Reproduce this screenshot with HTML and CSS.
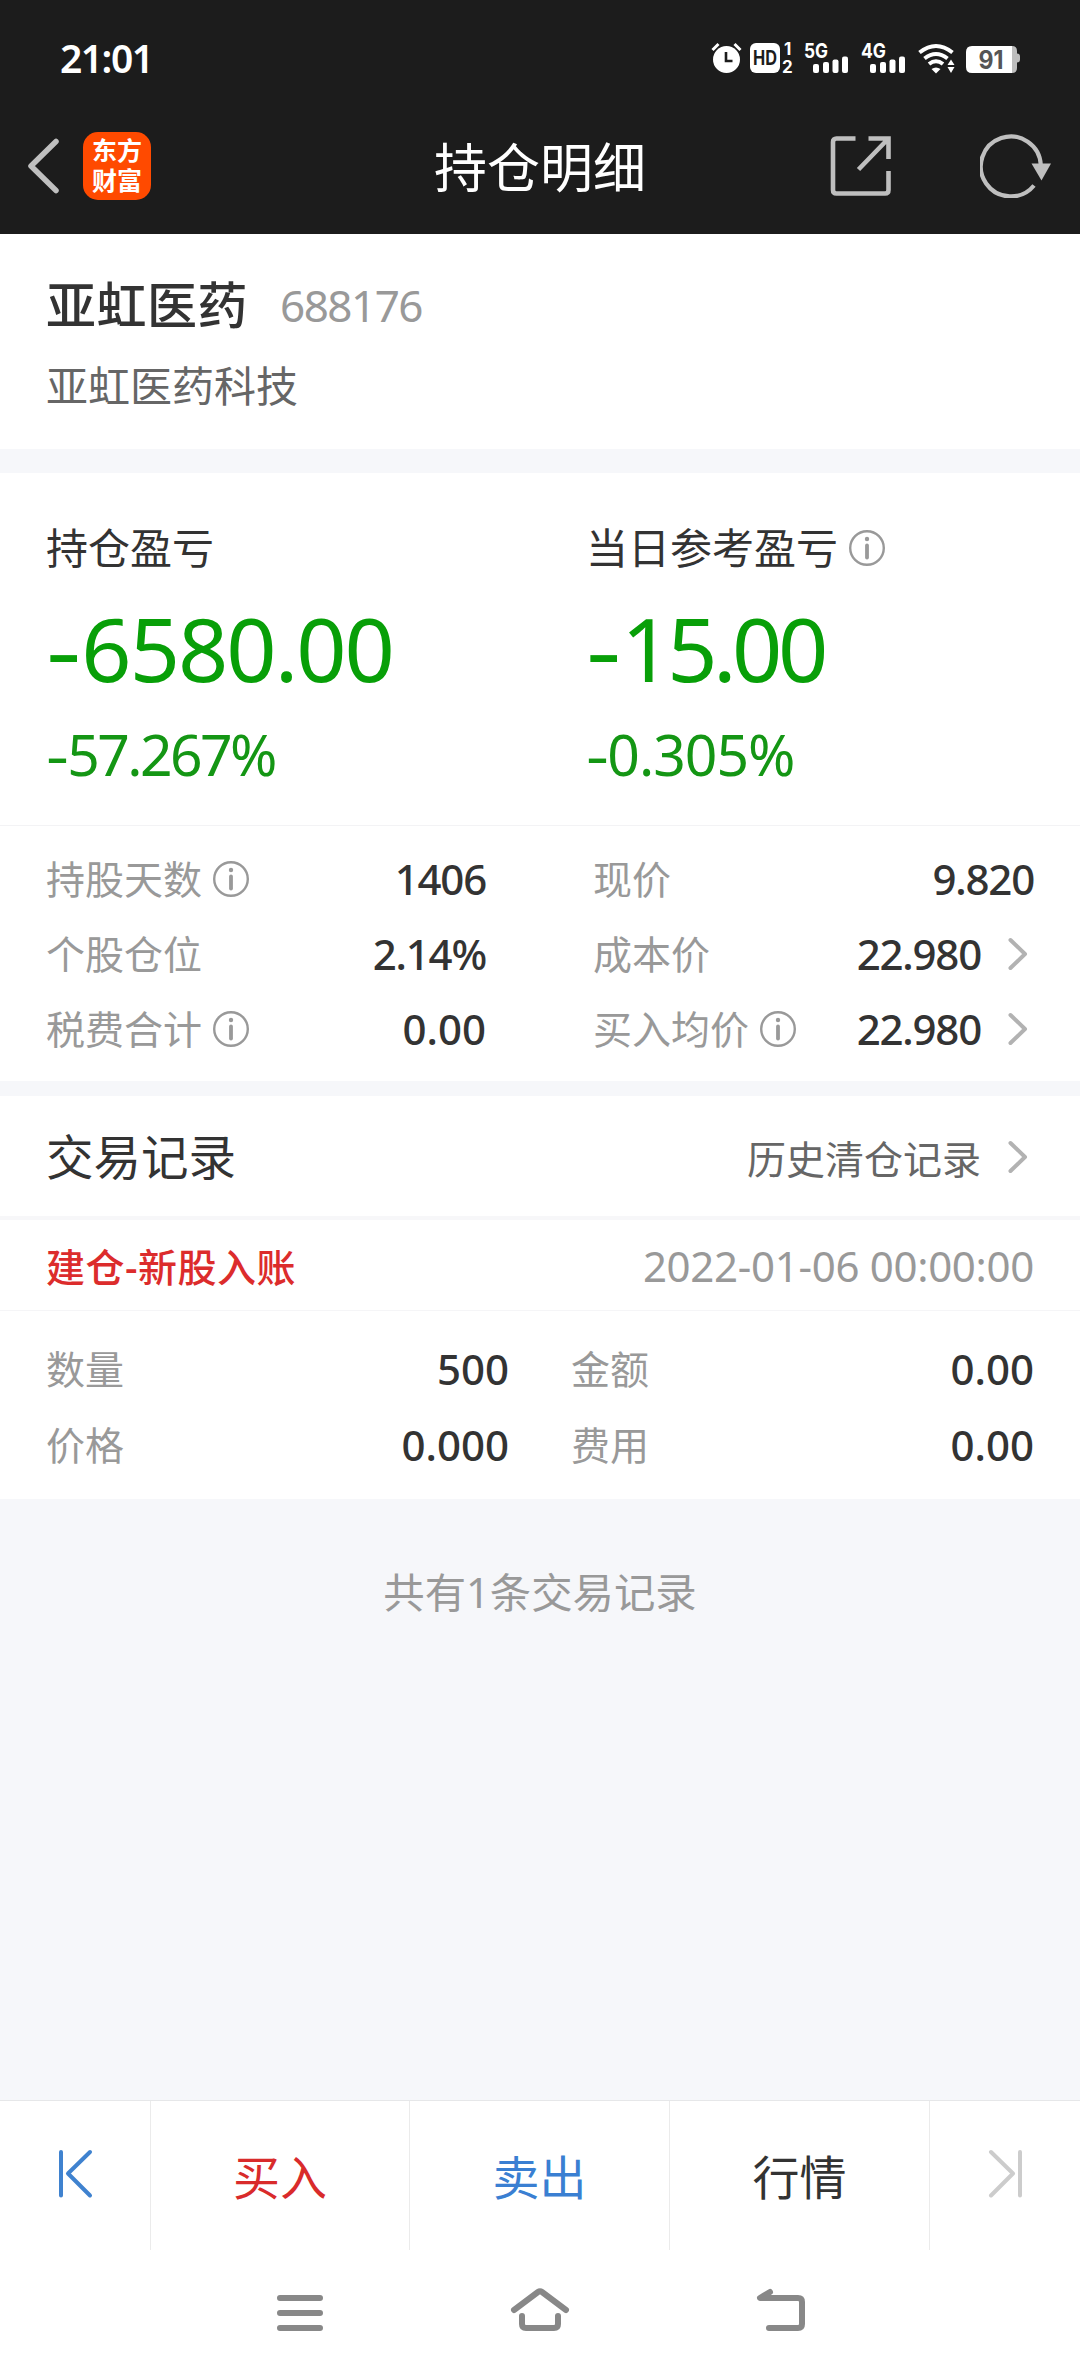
FILE: index.html
```html
<!DOCTYPE html>
<html lang="zh-CN">
<head>
    <meta charset="UTF-8">
    <meta name="viewport" content="width=device-width, initial-scale=1.0">
    <title>持仓明细</title>
    <link rel="stylesheet" href="styles.css">
</head>
<body>
    <svg class="defs" width="0" height="0">
        <symbol id="info" viewBox="0 0 36 36">
            <circle cx="18" cy="18" r="16.8" fill="none" stroke="#999" stroke-width="2.4"/>
            <circle cx="18" cy="9" r="2.2" fill="#999"/>
            <path d="M18 15.5v12" stroke="#999" stroke-width="3.8" stroke-linecap="round"/>
        </symbol>
        <symbol id="arrow" viewBox="0 0 20 34">
            <path d="M2.5 3l14.5 14-14.5 14" fill="none" stroke="#b2b2b2" stroke-width="4" stroke-linecap="round" stroke-linejoin="round"/>
        </symbol>
    </svg>

    <header class="top">
        <div class="status">
            <span class="time">21:01</span>
            <svg class="status-icons" width="312" height="44" viewBox="0 0 312 44">
                <!-- alarm -->
                <g fill="none" stroke="#fff" stroke-width="3">
                    <path d="M1.5 10l6-6M29.500 10l-6-6"/>
                </g>
                <circle cx="15.500" cy="19.500" r="13.500" fill="#fff"/>
                <path d="M15 12v9h6.500" fill="none" stroke="#1c1c1c" stroke-width="2.600"/>
                <!-- hd -->
                <rect x="39" y="3" width="30" height="30" rx="6" fill="#fff"/>
                <text class="st-hd" x="54" y="25" textLength="24" lengthAdjust="spacingAndGlyphs">HD</text>
                <text class="st-num" x="73" y="15">1</text>
                <text class="st-num" x="71" y="33">2</text>
                <!-- signal 1 -->
                <text class="st-net" x="93" y="18" textLength="24" lengthAdjust="spacingAndGlyphs">5G</text>
                <g fill="#fff">
                    <rect x="102" y="24" width="6" height="9" rx="2"/>
                    <rect x="112" y="22" width="6" height="11" rx="2"/>
                    <rect x="121.500" y="19.500" width="6" height="13.500" rx="2"/>
                    <rect x="131" y="16.500" width="6" height="16.500" rx="2"/>
                </g>
                <!-- signal 2 -->
                <text class="st-net" x="150" y="18" textLength="25" lengthAdjust="spacingAndGlyphs">4G</text>
                <g fill="#fff">
                    <rect x="159" y="24" width="6" height="9" rx="2"/>
                    <rect x="169" y="22" width="6" height="11" rx="2"/>
                    <rect x="178.500" y="19.500" width="6" height="13.500" rx="2"/>
                    <rect x="188" y="16.500" width="6" height="16.500" rx="2"/>
                </g>
                <!-- wifi -->
                <g fill="none" stroke="#fff" stroke-width="4">
                    <path d="M208.500 12.500q16.500-13 33 0"/>
                    <path d="M213.500 18.500q11.500-9 23 0"/>
                    <path d="M218 24q7-5.500 14 0"/>
                </g>
                <path d="M220.500 29q4.500-3 9 0l-4.500 4.500z" fill="#fff"/>
                <path d="M236.500 25h7l-3.500-5.500zM236.500 27h7l-3.500 6z" fill="#fff"/>
                <!-- battery -->
                <path d="M300 6h1q5 0 5 5v2.500q3 0 3 3v3q0 3-3 3v5.500q0 5-5 5h-1z" fill="#bdbdbd"/>
                <path d="M261 6h40v27h-40q-6 0-6-6v-15q0-6 6-6z" fill="#fff"/>
                <text class="st-bat" x="280" y="28.500" textLength="25" lengthAdjust="spacingAndGlyphs">91</text>
            </svg>
        </div>
        <nav class="nav">
            <div class="nav-left">
                <svg width="36" height="58" viewBox="0 0 36 58">
                    <path d="M31 4.500L6 29l25 24.500" fill="none" stroke="#bfbfbf" stroke-width="5.500" stroke-linecap="round" stroke-linejoin="round"/>
                </svg>
                <div class="logo"><span>东方</span><span>财富</span></div>
            </div>
            <h1>持仓明细</h1>
            <div class="nav-right">
                <svg width="62" height="62" viewBox="0 0 62 62">
                    <g fill="none" stroke="#bfbfbf" stroke-width="4.600">
                        <path d="M25.500 3.500H6.500q-3.500 0-3.500 3.500v48q0 3.500 3.500 3.500h48.500q3.500 0 3.500-3.500V36"/>
                        <path d="M38.500 3.500h20V24M57.500 4.500L28.500 34.500"/>
                    </g>
                </svg>
                <svg width="72" height="64" viewBox="0 0 72 64">
                    <path d="M54 51.500a30 30 0 1 1 6.800-20.500" fill="none" stroke="#bfbfbf" stroke-width="4.200"/>
                    <path d="M51.500 29.500h19.500L61.500 46.500z" fill="#bfbfbf"/>
                </svg>
            </div>
        </nav>
    </header>

    <section class="stock">
        <div class="stock-title">
            <h2>亚虹医药</h2>
            <span class="code">688176</span>
        </div>
        <p class="company">亚虹医药科技</p>
    </section>

    <section class="profit">
        <div class="profit-col">
            <div class="profit-label">持仓盈亏</div>
            <div class="profit-money"><span class="sign">-</span>6580.00</div>
            <div class="profit-rate"><span class="sign">-</span>57.267%</div>
        </div>
        <div class="profit-col">
            <div class="profit-label">当日参考盈亏<svg class="info"><use href="#info"/></svg></div>
            <div class="profit-money today"><span class="sign">-</span>15.00</div>
            <div class="profit-rate today"><span class="sign">-</span>0.305%</div>
        </div>
    </section>

    <section class="detail">
        <div class="detail-col">
            <div class="row"><span class="label">持股天数<svg class="info"><use href="#info"/></svg></span><span class="value tight">1406</span></div>
            <div class="row"><span class="label">个股仓位</span><span class="value tight">2.14%</span></div>
            <div class="row"><span class="label">税费合计<svg class="info"><use href="#info"/></svg></span><span class="value">0.00</span></div>
        </div>
        <div class="detail-col">
            <div class="row"><span class="label">现价</span><span class="value tight">9.820</span></div>
            <div class="row"><span class="label">成本价</span><span class="value tight">22.980<svg class="arrow"><use href="#arrow"/></svg></span></div>
            <div class="row"><span class="label">买入均价<svg class="info"><use href="#info"/></svg></span><span class="value tight">22.980<svg class="arrow"><use href="#arrow"/></svg></span></div>
        </div>
    </section>

    <section class="records">
        <div class="records-head">
            <h3>交易记录</h3>
            <a class="history">历史清仓记录<svg class="arrow"><use href="#arrow"/></svg></a>
        </div>
        <div class="record-title">
            <span class="type">建仓-新股入账</span>
            <span class="date">2022-01-06 00:00:00</span>
        </div>
        <div class="record-body">
            <div class="row"><span class="label">数量</span><span class="value">500</span></div>
            <div class="row"><span class="label">金额</span><span class="value">0.00</span></div>
            <div class="row"><span class="label">价格</span><span class="value">0.000</span></div>
            <div class="row"><span class="label">费用</span><span class="value">0.00</span></div>
        </div>
    </section>

    <main class="count">共有1条交易记录</main>

    <footer class="tabs">
        <div class="tab">
            <svg width="36" height="50" viewBox="0 0 36 50">
                <path d="M4 3v43.500M33 3L11 24.500 33 46.500" fill="none" stroke="#3f82cf" stroke-width="4" stroke-linecap="round" stroke-linejoin="round"/>
            </svg>
        </div>
        <div class="tab buy">买入</div>
        <div class="tab sell">卖出</div>
        <div class="tab">行情</div>
        <div class="tab">
            <svg width="36" height="50" viewBox="0 0 36 50">
                <path d="M33 3v43.500M4 3l22 21.500L4 46.500" fill="none" stroke="#ccc" stroke-width="4" stroke-linecap="round" stroke-linejoin="round"/>
            </svg>
        </div>
    </footer>

    <div class="system">
        <svg width="60" height="50" viewBox="0 0 60 50">
            <path d="M10 13h40M10 28h40M10 43h40"/>
        </svg>
        <svg width="60" height="50" viewBox="0 0 60 50">
            <path d="M4 25L28 7q2-1.500 4 0l24 18M12 31v8q0 4 4 4h28q4 0 4-4v-8"/>
        </svg>
        <svg width="60" height="50" viewBox="0 0 60 50">
            <path d="M20 7L10 13h38q4 0 4 4v22q0 4-4 4H19"/>
        </svg>
    </div>
</body>
</html>
```
FILE: styles.css
```css
*{
  box-sizing: border-box;
  margin: 0;
  padding: 0;
}
body{
  display: flex;
  flex-direction: column;
  width: 1080px;
  height: 2376px;
  font-family: 'Noto Sans', 'Noto Sans CJK SC', sans-serif;
  color: #333;
  background-color: #f6f7fa;
  overflow: hidden;
}
.defs{
  display: none;
}
.top{
  height: 234px;
  background-color: #1c1c1c;
  color: white;
}
.status{
  display: flex;
  justify-content: space-between;
  height: 100px;
  padding: 0 57px 0 60px;
}
.time{
  font-size: 39px;
  font-weight: 600;
  line-height: 115px;
  letter-spacing: -1.5px;
}
.status-icons{
  margin-top: 40px;
}
.st-hd, .st-num, .st-net, .st-bat{
  font-family: 'Inter', sans-serif;
  font-weight: 700;
  fill: white;
}
.st-hd{
  font-size: 20px;
  fill: #1c1c1c;
  text-anchor: middle;
}
.st-num{
  font-size: 17px;
}
.st-net{
  font-size: 20px;
}
.st-bat{
  font-size: 25px;
  fill: #555;
  text-anchor: middle;
}
.nav{
  display: grid;
  grid-template-columns: 1fr 300px 1fr;
  align-items: center;
  height: 132px;
}
.nav-left{
  display: flex;
  align-items: center;
  gap: 22px;
  padding-left: 25px;
}
.logo{
  display: flex;
  flex-direction: column;
  align-items: center;
  width: 68px;
  height: 68px;
  padding-top: 3px;
  border-radius: 15px;
  background-color: #ff4a00;
  font-size: 25px;
  font-weight: 700;
  line-height: 30px;
}
.nav h1{
  padding-top: 4px;
  font-size: 53px;
  font-weight: 400;
  text-align: center;
  line-height: 70px;
}
.nav-right{
  display: flex;
  align-items: center;
  justify-content: flex-end;
  gap: 88px;
  padding-right: 28px;
}
.stock{
  height: 215px;
  padding: 34px 46px 0;
  background-color: white;
}
.stock-title{
  display: flex;
  align-items: center;
  gap: 32px;
  height: 74px;
}
.stock h2{
  font-size: 50px;
  font-weight: 500;
  line-height: 74px;
  letter-spacing: 0.5px;
}
.code{
  font-size: 44px;
  line-height: 74px;
  letter-spacing: -1.5px;
  color: #999;
}
.company{
  margin-top: 14px;
  font-size: 42px;
  line-height: 60px;
  color: #666;
}
.profit{
  display: grid;
  grid-template-columns: 1fr 1fr;
  height: 353px;
  margin-top: 24px;
  padding: 45px 0 0 46px;
  border-bottom: 1px solid #f3f3f5;
  background-color: white;
}
.profit-col:last-child{
  padding-left: 23px;
}
.profit-label{
  display: flex;
  align-items: center;
  font-size: 42px;
  line-height: 60px;
}
.info{
  width: 36px;
  height: 36px;
  margin-left: 11px;
}
.profit-money{
  margin-top: 15px;
  font-size: 88px;
  line-height: 110px;
  letter-spacing: -2px;
  color: #089f08;
}
.profit-money.today{
  letter-spacing: -4.5px;
}
.profit-rate{
  margin-top: 11px;
  font-size: 57px;
  line-height: 80px;
  letter-spacing: -2.6px;
  color: #149614;
}
.profit-rate.today{
  letter-spacing: -1px;
}
/* the hyphen is narrow in this font, stretch it to a minus */
.sign{
  display: inline-block;
  margin-right: 7px;
  letter-spacing: 0;
  transform: scaleX(1.25);
  transform-origin: left;
}
.profit-rate .sign{
  margin-right: 3px;
}
.detail{
  display: grid;
  grid-template-columns: 547px 1fr;
  height: 255px;
  padding: 15px 46px 0;
  background-color: white;
}
.detail-col:first-child{
  padding-right: 107px;
}
.row{
  display: flex;
  align-items: center;
  justify-content: space-between;
  height: 75px;
  line-height: 75px;
}
.label{
  display: flex;
  align-items: center;
  font-size: 39px;
  color: #999;
}
.label .info{
  margin-left: 11px;
}
.value{
  display: flex;
  align-items: center;
  font-size: 42px;
  font-weight: 500;
}
.tight{
  letter-spacing: -1.2px;
}
.arrow{
  width: 20px;
  height: 34px;
  margin: 0 6px 0 27px;
}
.records{
  height: 403px;
  margin-top: 15px;
  background-color: white;
}
.records-head{
  display: flex;
  align-items: center;
  justify-content: space-between;
  height: 124px;
  padding: 0 46px;
  border-bottom: 4px solid #f7f7f9;
}
.records-head h3{
  padding-bottom: 3px;
  font-size: 47.5px;
  font-weight: 400;
}
.history{
  display: flex;
  align-items: center;
  padding-top: 2px;
  font-size: 39px;
  color: #666;
}
.record-title{
  display: flex;
  align-items: center;
  justify-content: space-between;
  height: 91px;
  padding: 0 46px;
  border-bottom: 1px solid #f5f5f7;
}
.type{
  font-size: 39px;
  font-weight: 500;
  letter-spacing: 0.5px;
  color: #dc2c2c;
}
.date{
  font-size: 42px;
  letter-spacing: -0.3px;
  color: #999;
}
.record-body{
  display: grid;
  grid-template-columns: 463px 463px;
  column-gap: 62px;
  padding: 19px 46px 0;
}
.record-body .row{
  height: 76px;
}
.count{
  flex: 1;
  padding-top: 63px;
  font-size: 41.4px;
  line-height: 60px;
  text-align: center;
  color: #999;
}
.tabs{
  display: grid;
  grid-template-columns: 151px 259px 260px 260px 150px;
  height: 150px;
  border-top: 1px solid #e6e7e9;
  background-color: white;
}
.tab{
  display: flex;
  align-items: center;
  justify-content: center;
  padding-bottom: 3px;
  border-right: 1px solid #ebebeb;
  font-size: 47px;
}
.tab:last-child{
  border-right: none;
}
.buy{
  color: #d92b2b;
}
.sell{
  color: #3a7fd2;
}
.system{
  display: flex;
  justify-content: center;
  gap: 180px;
  height: 126px;
  padding-top: 35px;
  background-color: white;
}
.system svg{
  fill: none;
  stroke: #888;
  stroke-width: 6;
  stroke-linecap: round;
  stroke-linejoin: round;
}
```
